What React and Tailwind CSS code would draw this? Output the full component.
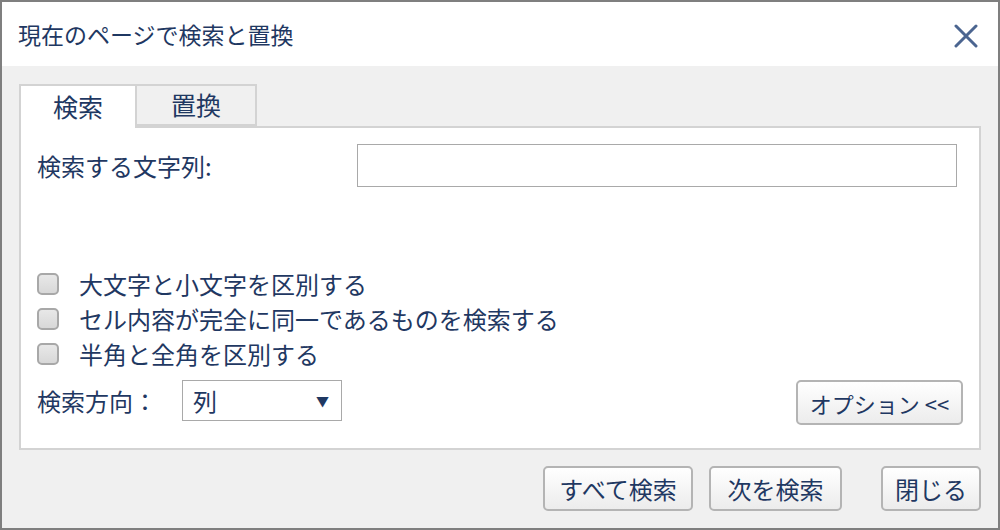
import { useState } from 'react';

const font = { fontFamily: '"Noto Sans CJK JP", "Noto Sans", sans-serif' };

const options = [
  '大文字と小文字を区別する',
  'セル内容が完全に同一であるものを検索する',
  '半角と全角を区別する',
];

function Button({ children, className = '' }) {
  return (
    <button
      className={`h-[45px] rounded-[5px] border-2 border-[#b4b4b4] bg-gradient-to-b from-white to-[#ececec] leading-none text-[#1f3862] ${className}`}
    >
      {children}
    </button>
  );
}

export default function App() {
  const [tab, setTab] = useState('search');
  const [checked, setChecked] = useState([false, false, false]);

  return (
    <div
      style={font}
      className="flex h-[530px] w-[1000px] flex-col border-2 border-[#7f7f7f] bg-[#f0f0f0] text-[#1f3862]"
    >
      {/* タイトルバー */}
      <div className="flex h-[64px] shrink-0 items-center justify-between bg-white pl-[16px] pr-[20px]">
        <span className="text-[23px]">現在のページで検索と置換</span>
        <svg width="24" height="24" viewBox="0 0 24 24" className="mt-[4px]">
          <path d="M2 2 L22 22 M22 2 L2 22" stroke="#4b6590" strokeWidth="3" strokeLinecap="round" />
        </svg>
      </div>

      <div className="flex flex-1 flex-col px-[17px] pt-[18px] pb-[15px]">
        {/* タブ */}
        <div className="flex h-[42px]">
          <button
            onClick={() => setTab('search')}
            className={`w-[118px] border-2 border-b-0 border-[#d3d3d3] text-[25px] ${tab === 'search' ? 'relative z-10 h-[44px] bg-white' : 'h-[42px] bg-[#f0f0f0]'}`}
          >
            検索
          </button>
          <button
            onClick={() => setTab('replace')}
            className={`w-[120px] border-2 border-l-0 border-[#d3d3d3] text-[25px] ${tab === 'replace' ? 'relative z-10 h-[44px] border-b-0 bg-white' : 'h-[42px] bg-[#f0f0f0]'}`}
          >
            置換
          </button>
        </div>

        {/* パネル */}
        <div className="flex h-[324px] flex-col border-2 border-[#d3d3d3] bg-white pl-[16px] pr-[22px]">
          <div className="mt-[16px] flex items-center justify-between">
            <span className="text-[24px]">検索する文字列:</span>
            <input className="h-[43px] w-[600px] border border-[#a9a9a9] px-2 text-[20px] outline-none" />
          </div>

          <div className="mt-[86px] flex flex-col gap-[13px]">
            {options.map((label, i) => (
              <label key={label} className="flex h-[22px] items-center gap-[20px] text-[24px]">
                <span
                  onClick={() => setChecked(checked.map((c, j) => (j === i ? !c : c)))}
                  className="flex h-[22px] w-[22px] shrink-0 items-center justify-center rounded-[5px] border-2 border-[#a8a8a8] bg-gradient-to-b from-[#e8e8e8] to-[#d8d8d8] text-[14px]"
                >
                  {checked[i] ? '✓' : ''}
                </span>
                {label}
              </label>
            ))}
          </div>

          <div className="mt-[15px] flex items-start justify-between">
            <div className="flex items-center">
              <span className="w-[145px] text-[24px]">検索方向：</span>
              <div className="flex h-[41px] w-[160px] items-center justify-between border border-[#a9a9a9] bg-white pl-[10px] pr-[12px]">
                <span className="text-[24px]">列</span>
                <span className="text-[13px]">▼</span>
              </div>
            </div>
            <Button className="mr-[-6px] w-[167px] text-[22px]">オプション &lt;&lt;</Button>
          </div>
        </div>

        {/* 下部ボタン */}
        <div className="mt-[16px] flex justify-end">
          <Button className="w-[150px] text-[24px]">すべて検索</Button>
          <Button className="ml-[16px] w-[133px] text-[24px]">次を検索</Button>
          <Button className="ml-[39px] w-[100px] text-[24px]">閉じる</Button>
        </div>
      </div>
    </div>
  );
}
